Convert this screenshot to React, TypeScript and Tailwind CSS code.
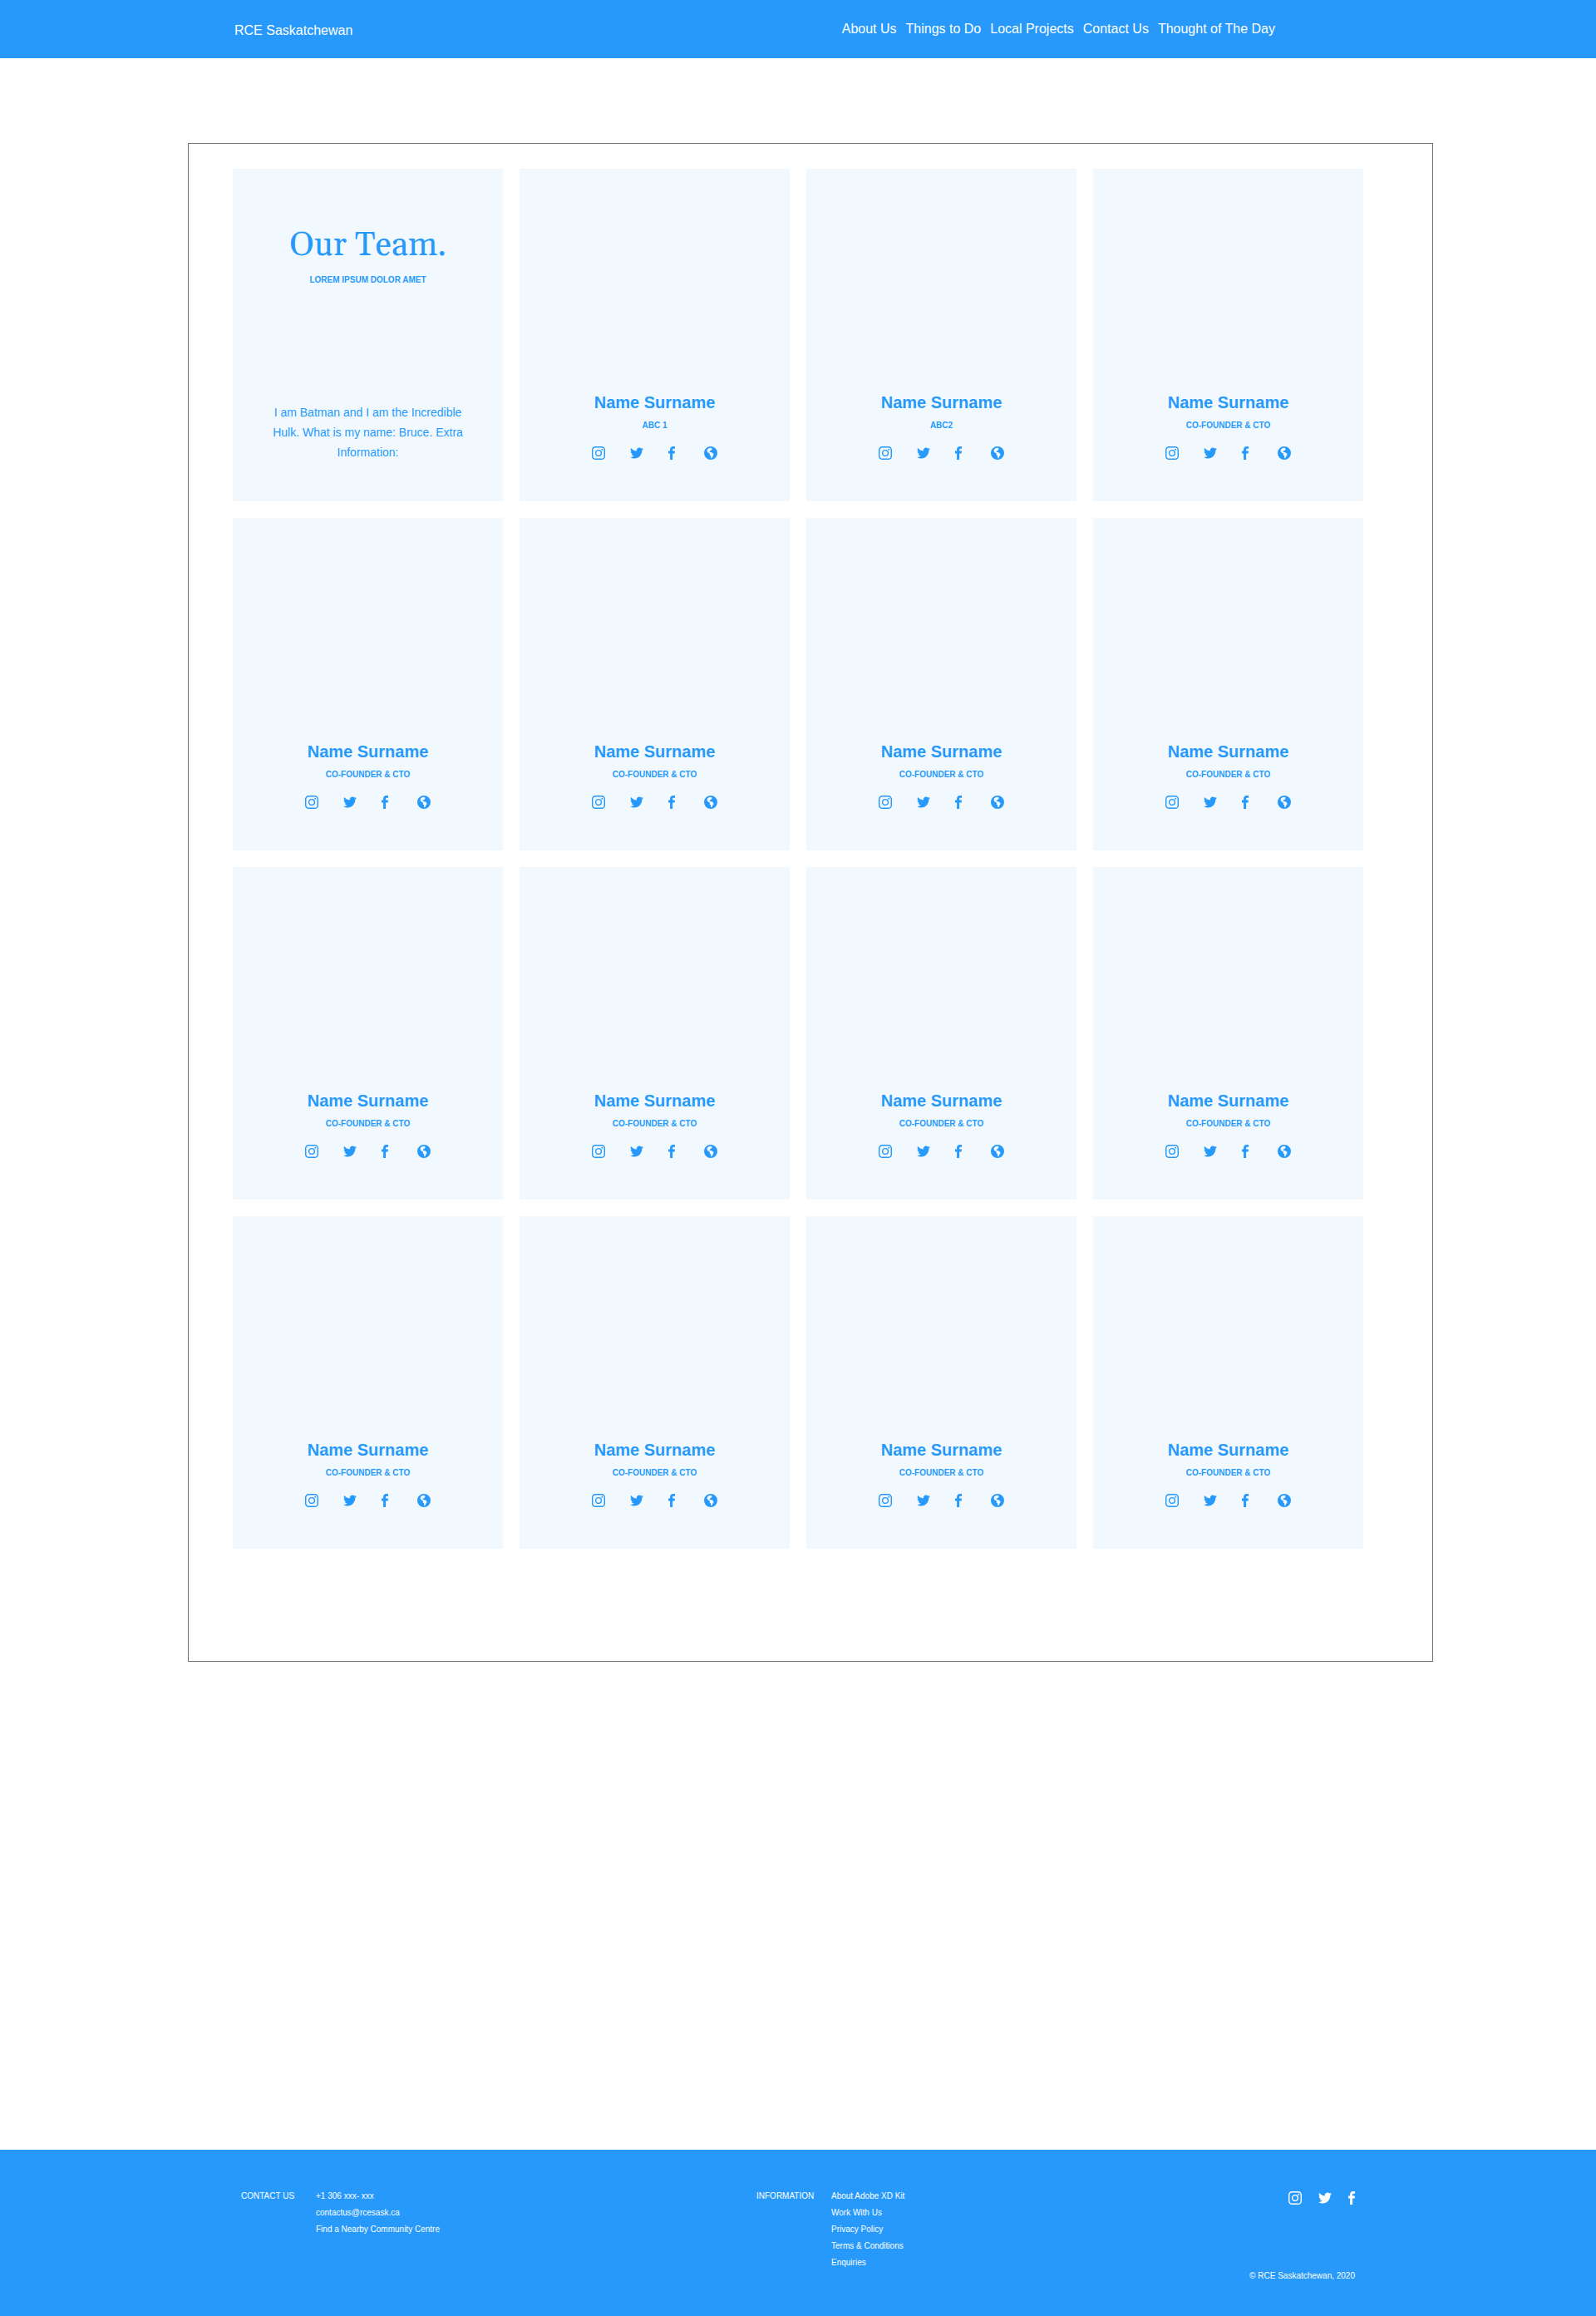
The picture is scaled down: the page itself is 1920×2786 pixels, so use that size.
import React from "react";

type IconProps = { className?: string };

function InstagramIcon({ className = "h-4 w-4" }: IconProps) {
  return (
    <svg viewBox="0 0 16 16" className={className} fill="none" stroke="currentColor" strokeWidth="1.44" aria-hidden="true">
      <rect x="0.72" y="0.72" width="14.56" height="14.56" rx="3.6" />
      <circle cx="8" cy="8" r="3.39" />
      <circle cx="12.27" cy="3.73" r="0.96" fill="currentColor" stroke="none" />
    </svg>
  );
}

function TwitterIcon({ className = "h-4 w-4" }: IconProps) {
  return (
    <svg viewBox="0 0 16 16" className={className} fill="currentColor" aria-hidden="true">
      <path d="M16 3c-.6.3-1.2.4-1.9.5.7-.4 1.2-1 1.4-1.8-.6.4-1.3.6-2.1.8-.6-.6-1.5-1-2.4-1-1.7 0-3.2 1.5-3.2 3.3 0 .3 0 .5.1.7-2.7-.1-5.2-1.4-6.8-3.4-.3.5-.4 1-.4 1.7 0 1.1.6 2.1 1.5 2.7-.5 0-1-.2-1.5-.4C.7 7.7 1.8 9 3.3 9.3c-.3.1-.6.1-.9.1-.2 0-.4 0-.6-.1.4 1.3 1.6 2.3 3.1 2.3-1.1.9-2.5 1.4-4.1 1.4H0c1.5.9 3.2 1.5 5 1.5 6 0 9.3-5 9.3-9.3v-.4C15 4.3 15.6 3.7 16 3z" />
    </svg>
  );
}

function FacebookIcon({ className = "h-4 w-2" }: IconProps) {
  return (
    <svg viewBox="0 0 8 16" className={className} fill="currentColor" aria-hidden="true">
      <path d="M2.1 16V8.500H0V5.500h2.100V3.800C2.100 1.300 3.600 0 5.900 0c1.100 0 1.900.1 2.100.1v2.700H6.600c-1.200 0-1.500.6-1.500 1.400v1.300H8l-.4 3H5.100V16z" />
    </svg>
  );
}

function GlobeIcon({ className = "h-4 w-4" }: IconProps) {
  return (
    <svg viewBox="0 0 16 16" className={className} fill="currentColor" fillRule="evenodd" aria-hidden="true">
      <path d="M8 0a8 8 0 1 0 0 16A8 8 0 0 0 8 0zM8.8 1.700 9.600 2.900 9.200 4.300 7.700 5.200 6.700 6 6.900 7 8.600 7 10.900 8.200 11.600 9.900 10.600 11.600 9.400 13.900 8.300 14.200 8.100 11.600 6.700 10.200 6.800 8.400 4.800 7.600 3.500 5.800 4 3.500 6 2z" />
    </svg>
  );
}

const NAV = ["About Us", "Things to Do", "Local Projects", "Contact Us", "Thought of The Day"];

const ROLES = ["ABC 1", "ABC2", ...Array<string>(13).fill("CO-FOUNDER & CTO")];

const CONTACT = ["+1 306 xxx- xxx", "contactus@rcesask.ca", "Find a Nearby Community Centre"];

const INFORMATION = ["About Adobe XD Kit", "Work With Us", "Privacy Policy", "Terms & Conditions", "Enquiries"];

function Header() {
  return (
    <header className="flex h-[70px] items-center bg-[#2699fb] text-base text-white">
      <div className="flex w-full justify-between pl-[282px] pr-[386px]">
        <a href="#home" className="mt-1">RCE Saskatchewan</a>
        <nav className="mt-0.5 flex gap-[11px]" aria-label="Main">
          {NAV.map((item) => (
            <a key={item} href="#nav" className="whitespace-nowrap">{item}</a>
          ))}
        </nav>
      </div>
    </header>
  );
}

function IntroCard() {
  return (
    <article className="flex min-h-[400px] flex-col items-center justify-between bg-[#f1f9ff] px-10 pb-[47px] pt-[68px] text-center">
      <div>
        <h1 className="font-['Gelasio','Georgia','Liberation_Serif',serif] text-[40px] leading-[50px]">Our Team.</h1>
        <p className="mt-2 text-[10px] font-bold leading-4">LOREM IPSUM DOLOR AMET</p>
      </div>
      <p className="text-sm leading-6">
        I am Batman and I am the Incredible Hulk. What is my name: Bruce. Extra Information:
      </p>
    </article>
  );
}

function MemberCard({ role }: { role: string }) {
  return (
    <article className="flex min-h-[400px] flex-col items-center justify-end bg-[#f1f9ff] pb-[50px] text-center">
      <h2 className="text-xl font-bold leading-6">Name Surname</h2>
      <p className="mt-2 text-[10px] font-bold leading-4">{role}</p>
      <div className="mt-[17px] flex gap-[30px]">
        <a href="#instagram" aria-label="Instagram"><InstagramIcon /></a>
        <a href="#twitter" aria-label="Twitter"><TwitterIcon /></a>
        <a href="#facebook" aria-label="Facebook" className="w-[13px]"><FacebookIcon /></a>
        <a href="#website" aria-label="Website"><GlobeIcon /></a>
      </div>
    </article>
  );
}

function FooterList({ title, items }: { title: string; items: string[] }) {
  return (
    <section className="flex">
      <h2 className="w-[90px]">{title}</h2>
      <ul>
        {items.map((item) => (
          <li key={item}><a href="#footer">{item}</a></li>
        ))}
      </ul>
    </section>
  );
}

function Footer() {
  return (
    <footer className="flex min-h-[200px] bg-[#2699fb] px-[290px] pb-[34px] pt-[46px] text-[10px] leading-5 text-white">
      <div className="w-[620px]">
        <FooterList title="CONTACT US" items={CONTACT} />
      </div>
      <FooterList title="INFORMATION" items={INFORMATION} />
      <div className="ml-auto flex flex-col items-end justify-between pb-1 pt-1">
        <div className="flex gap-5">
          <a href="#instagram" aria-label="Instagram"><InstagramIcon /></a>
          <a href="#twitter" aria-label="Twitter"><TwitterIcon /></a>
          <a href="#facebook" aria-label="Facebook"><FacebookIcon /></a>
        </div>
        <p>© RCE Saskatchewan, 2020</p>
      </div>
    </footer>
  );
}

export default function App() {
  return (
    <div className="flex min-h-screen flex-col bg-white font-['Liberation_Sans',Arial,sans-serif]">
      <Header />
      <main className="mb-auto ml-[226px] mr-[196px] mt-[102px] border border-[#707070] pb-[135px] pl-[53px] pr-[83px] pt-[30px] text-[#2699fb]">
        <div className="grid grid-cols-4 gap-5">
          <IntroCard />
          {ROLES.map((role, i) => (
            <MemberCard key={i} role={role} />
          ))}
        </div>
      </main>
      <Footer />
    </div>
  );
}
